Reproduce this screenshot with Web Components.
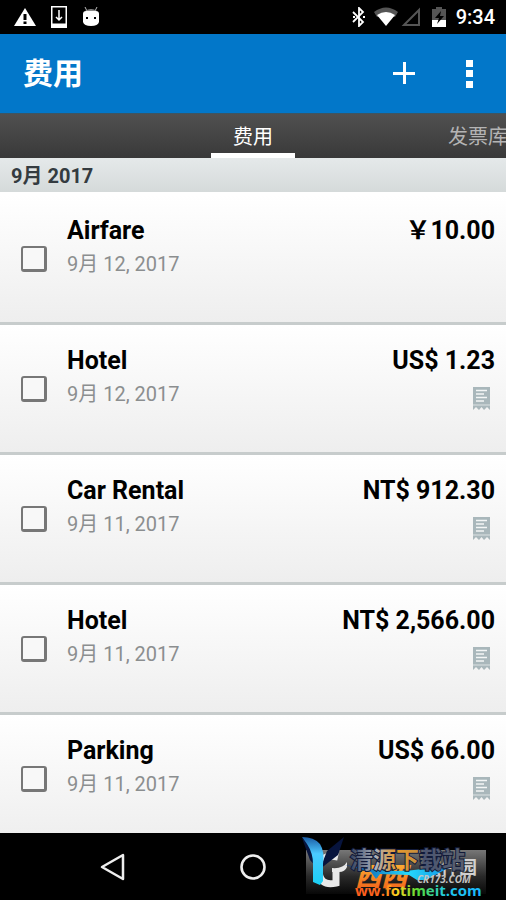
<!DOCTYPE html>
<html lang="zh-CN">
<head>
<meta charset="utf-8">
<meta name="viewport" content="width=device-width, initial-scale=1">
<title>费用</title>
<style>
html, body { margin: 0; height: 100%; }
body { font-family: Roboto, "Noto Sans CJK SC", sans-serif; background: #000; }
</style>
</head>
<body>
<expense-app></expense-app>
<script>
const define = (name, html, init) => customElements.define(name, class extends HTMLElement {
  constructor() {
    super();
    const t = document.createElement('template');
    t.innerHTML = '<style>*{box-sizing:border-box}button{border:0;padding:0;margin:0;background:none;font:inherit;color:inherit}svg{display:block}</style>' + html;
    this.attachShadow({ mode: 'open' }).append(t.content.cloneNode(true));
  }
  connectedCallback() { if (init) init(this, this.shadowRoot); }
});

define('status-bar', `
<style>
:host { display: flex; align-items: center; justify-content: space-between; height: 34px; padding: 0 11px 0 14px; background: #000; color: #fff; }
div { display: flex; align-items: center; }
.left { gap: 15px; }
time { font-size: 20px; line-height: 34px; font-weight: 500; margin-left: 10px; }
.wifi { margin-left: 8px; } .cell { margin-left: 3px; } .bat { margin-left: 11px; }
</style>
<div class="left">
<svg width="22" height="20" viewBox="0 0 22 20"><path fill="#fff" d="M11 1 22 19H0z"/><path fill="#000" d="M9.500 7h3v6h-3zm0 7.500h3V17h-3z"/></svg>
<svg width="16" height="22" viewBox="0 0 16 22"><path fill="#fff" fill-rule="evenodd" d="M0 0h16v22H0zM1.500 1.500v16h13v-16z"/><path fill="none" stroke="#fff" stroke-width="1.500" d="M8 4v10M5 11l3 3 3-3"/></svg>
<svg width="18" height="20" viewBox="0 0 18 20"><path fill="none" stroke="#bbb" d="m3 0 2 4m10-4-2 4"/><path fill="#fff" d="M1 7q0-3 3-3h10q3 0 3 3v8q-1 4-8 4t-8-4z"/><path fill="#888" d="M3 4q6-4 12 0z"/><path d="M4 10h2v2H4zm8 0h2v2h-2z"/></svg>
</div>
<div>
<svg width="14" height="20" viewBox="0 0 14 20"><path fill="none" stroke="#fff" stroke-width="1.800" d="m1 5 10 10-4 4V1l4 4L1 15"/><path fill="#fff" d="M1 9h2v2H1zm10 0h2v2h-2z"/></svg>
<svg class="wifi" width="24" height="20" viewBox="0 0 24 20"><path fill="#555" d="M0 5Q12-4 24 5l-3 5H3z"/><path fill="#fff" d="M3 8q9-6 18 0l-9 11z"/></svg>
<svg class="cell" width="20" height="20" viewBox="0 0 20 20"><path fill="none" stroke="#555" stroke-width="2" d="M3 18 18 3v15z"/></svg>
<svg class="bat" width="14" height="20" viewBox="0 0 14 20"><path fill="#555" d="M0 2h4V0h6v2h4v11H0z"/><path fill="#fff" d="M0 13h14v7H0z"/><path d="M9 4 3 11h4l-2 6 7-8H8z"/></svg>
<time>9:34</time>
</div>`);

define('app-header', `
<style>
:host { display: flex; align-items: center; height: 79px; padding: 0 19px 0 23px; background: #0277c9; color: #fff; }
h1 { flex: 1; margin: 0; font-size: 30px; line-height: 40px; font-weight: 700; }
button { height: 48px; display: grid; place-items: center; }
.add { width: 48px; margin-right: 25px; }
.more { width: 34px; }
</style>
<h1><slot></slot></h1>
<button class="add" aria-label="添加"><svg width="24" height="24"><path fill="#fff" d="M11 0h3v22h-3zM1 10h22v3H1z"/></svg></button>
<button class="more" aria-label="更多"><svg width="8" height="28"><path fill="#fff" d="M0 0h7v7H0zm0 10h7v7H0zm0 11h7v7H0z"/></svg></button>`);

define('tab-strip', `
<style>
:host { display: grid; grid-template-columns: 1fr auto 1fr; height: 45px; overflow: hidden; background: linear-gradient(#505050, #393939); border-top: 1px solid #3c5563; }
button { font-size: 20px; line-height: 46px; color: #b4b4b4; white-space: nowrap; }
.on { width: 84px; color: #fff; border-bottom: 5px solid #fff; height: 44px; }
.next { justify-self: end; margin-right: -2px; height: 39px; }
</style>
<span></span><button class="on" aria-current="page">费用</button><button class="next">发票库</button>`);

define('month-heading', `
<style>
:host { display: block; padding: 1px 11px 0; background: linear-gradient(#e5e9ea, #d5dada); color: #343b40; height: 34px; }
h2 { margin: 0; font-size: 20px; line-height: 34px; font-weight: 700; }
</style><h2><slot></slot></h2>`);

define('expense-item', `
<style>
:host { display: grid; grid-template-columns: 46px 1fr auto; align-items: start; height: 130px; padding: 20px 11px 0 21px; background: linear-gradient(#fff, #eee); border-bottom: 3px solid #c7cccc; }
input { appearance: none; width: 26px; height: 26px; margin: 31px 0 0; border: 2px solid #777; border-right-width: 3px; border-bottom-width: 3px; border-radius: 3px; background: #f8f8f8; }
label, .right { display: flex; flex-direction: column; }
b { font-size: 25px; line-height: 32px; font-weight: 700; color: #000; white-space: nowrap; }
.date { font-size: 20px; line-height: 34px; color: #8b8e8f; }
.right { align-items: flex-end; }
svg { margin: 10px 5px 0 0; }
:host([noreceipt]) svg { display: none; }
</style>
<input type="checkbox" id="c">
<label for="c"><b><slot></slot></b><span class="date"></span></label>
<div class="right"><b class="amount"></b>
<svg width="17" height="24" viewBox="0 0 17 24"><path fill="#a9b7bb" d="M0 0h17v23l-3-3-3 3-2.500-3L6 23l-3-3-3 3z"/><path stroke="#f4f6f6" stroke-width="1.500" d="M3 3.500h11M3 7h8M3 10.500h11M3 14h8"/><path stroke="#dce2e3" d="M0 18h17"/></svg></div>`,
(h, r) => {
  r.querySelector('.date').textContent = h.getAttribute('date');
  r.querySelector('.amount').textContent = h.getAttribute('amount');
});

define('site-mark', `
<style>
:host { display: grid; width: 194px; height: 66px; }
svg { width: 100%; height: 100%; overflow: visible; }
text { font-family: "Noto Sans CJK SC", sans-serif; }
.lat { font-family: "Open Sans", sans-serif; }
</style>
<svg viewBox="300 834 194 66" role="img">
<defs>
<linearGradient id="p" x2="0" y2="1"><stop stop-color="#777"/><stop offset=".6" stop-color="#292929"/><stop offset="1" stop-color="#080808"/></linearGradient>
<linearGradient id="w" x2="0" y2="1"><stop stop-color="#1b5ca5"/><stop offset=".35" stop-color="#4bc9ff"/><stop offset="1" stop-color="#19d0f4"/></linearGradient>
<linearGradient id="o" x2="0" y2="1"><stop stop-color="#ffc43a"/><stop offset="1" stop-color="#f15b18"/></linearGradient>
<linearGradient id="s"><stop stop-color="#0b3c99"/><stop offset=".6" stop-color="#25d9ff"/><stop offset="1" stop-color="#1290e0"/></linearGradient>
<linearGradient id="q"><stop stop-color="#32405d"/><stop offset=".22" stop-color="#a9b0bb"/><stop offset=".4" stop-color="#e79a2c"/><stop offset=".58" stop-color="#c9903c"/><stop offset=".64" stop-color="#4b5570"/><stop offset="1" stop-color="#59606e"/></linearGradient>
<linearGradient id="r"><stop stop-color="#ff5a1c"/><stop offset=".22" stop-color="#ff681c"/><stop offset=".33" stop-color="#ffd51f"/><stop offset=".5" stop-color="#54dc36"/><stop offset=".72" stop-color="#20c8ee"/><stop offset="1" stop-color="#19b5ff"/></linearGradient>
</defs>
<path fill="url(#p)" d="M306 850h180v44H306z"/>
<path fill="none" stroke="#e8e8e8" stroke-width="7" d="M338 857q-18-4-19 12 0 18 17 14V870"/>
<path fill="#e8e8e8" d="M332 868q11 1 15-6v5q-2 5-8 5h-7z"/>
<path fill="#07143d" d="m344 837-17 14-7 18 18-14z"/>
<path fill="#07143d" d="m302 838 8 22 8 9v-17z"/>
<path fill="url(#w)" d="M302 837q12 0 18 7 5 8 3 20v17l-3 4-7-3v-18q0-11-6-20z"/>
<text x="355" y="886" font-size="26" font-weight="900" font-style="italic" fill="url(#o)">西西</text>
<text x="423" y="874" font-size="18" font-weight="700" fill="#d0d0d0">软件园</text>
<path fill="url(#s)" d="m345 865 26 4q27 4 51 0l28-2-24 13h-9l-8-5-29-1-4 5-5-7z"/>
<text x="417" y="883" class="lat" font-size="10" font-weight="700" font-style="italic" fill="#c4c4c4">CR173.COM</text>
<text x="350" y="868" font-size="23" font-weight="700" fill="url(#q)" stroke="#111a39" stroke-width="2" paint-order="stroke">清源下载站</text>
<text x="355" y="896" class="lat" font-size="15" font-weight="700" fill="url(#r)">ww.fotimeit.com</text>
</svg>`);

define('nav-bar', `
<style>
:host { position: relative; display: grid; grid-template-columns: 1fr auto 1fr; align-items: center; height: 67px; background: #000; overflow: hidden; }
.back { justify-self: center; margin-right: 4px; }
button { display: grid; place-items: center; width: 48px; height: 48px; }
site-mark { position: absolute; right: 12px; bottom: 0; }
</style>
<button class="back" aria-label="返回"><svg width="26" height="28"><path fill="none" stroke="#eee" stroke-width="2.500" stroke-linejoin="round" d="M2 14 23 2v24z"/></svg></button>
<button aria-label="主页"><svg width="28" height="28"><circle cx="14" cy="14" r="11.500" fill="none" stroke="#eee" stroke-width="2.600"/></svg></button>
<span></span><site-mark></site-mark>`);

define('expense-app', `
<style>
:host { display: flex; flex-direction: column; height: 100vh; }
main { flex: 1; min-height: 0; overflow: hidden; background: #fff; }
section { padding-top: 3px; }
</style>
<status-bar></status-bar>
<app-header>费用</app-header>
<tab-strip></tab-strip>
<main>
<month-heading>9月 2017</month-heading>
<section>
<expense-item date="9月 12, 2017" amount="￥10.00" noreceipt>Airfare</expense-item>
<expense-item date="9月 12, 2017" amount="US$ 1.23">Hotel</expense-item>
<expense-item date="9月 11, 2017" amount="NT$ 912.30">Car Rental</expense-item>
<expense-item date="9月 11, 2017" amount="NT$ 2,566.00">Hotel</expense-item>
<expense-item date="9月 11, 2017" amount="US$ 66.00">Parking</expense-item>
</section>
</main>
<nav-bar></nav-bar>`);
</script>
</body>
</html>
